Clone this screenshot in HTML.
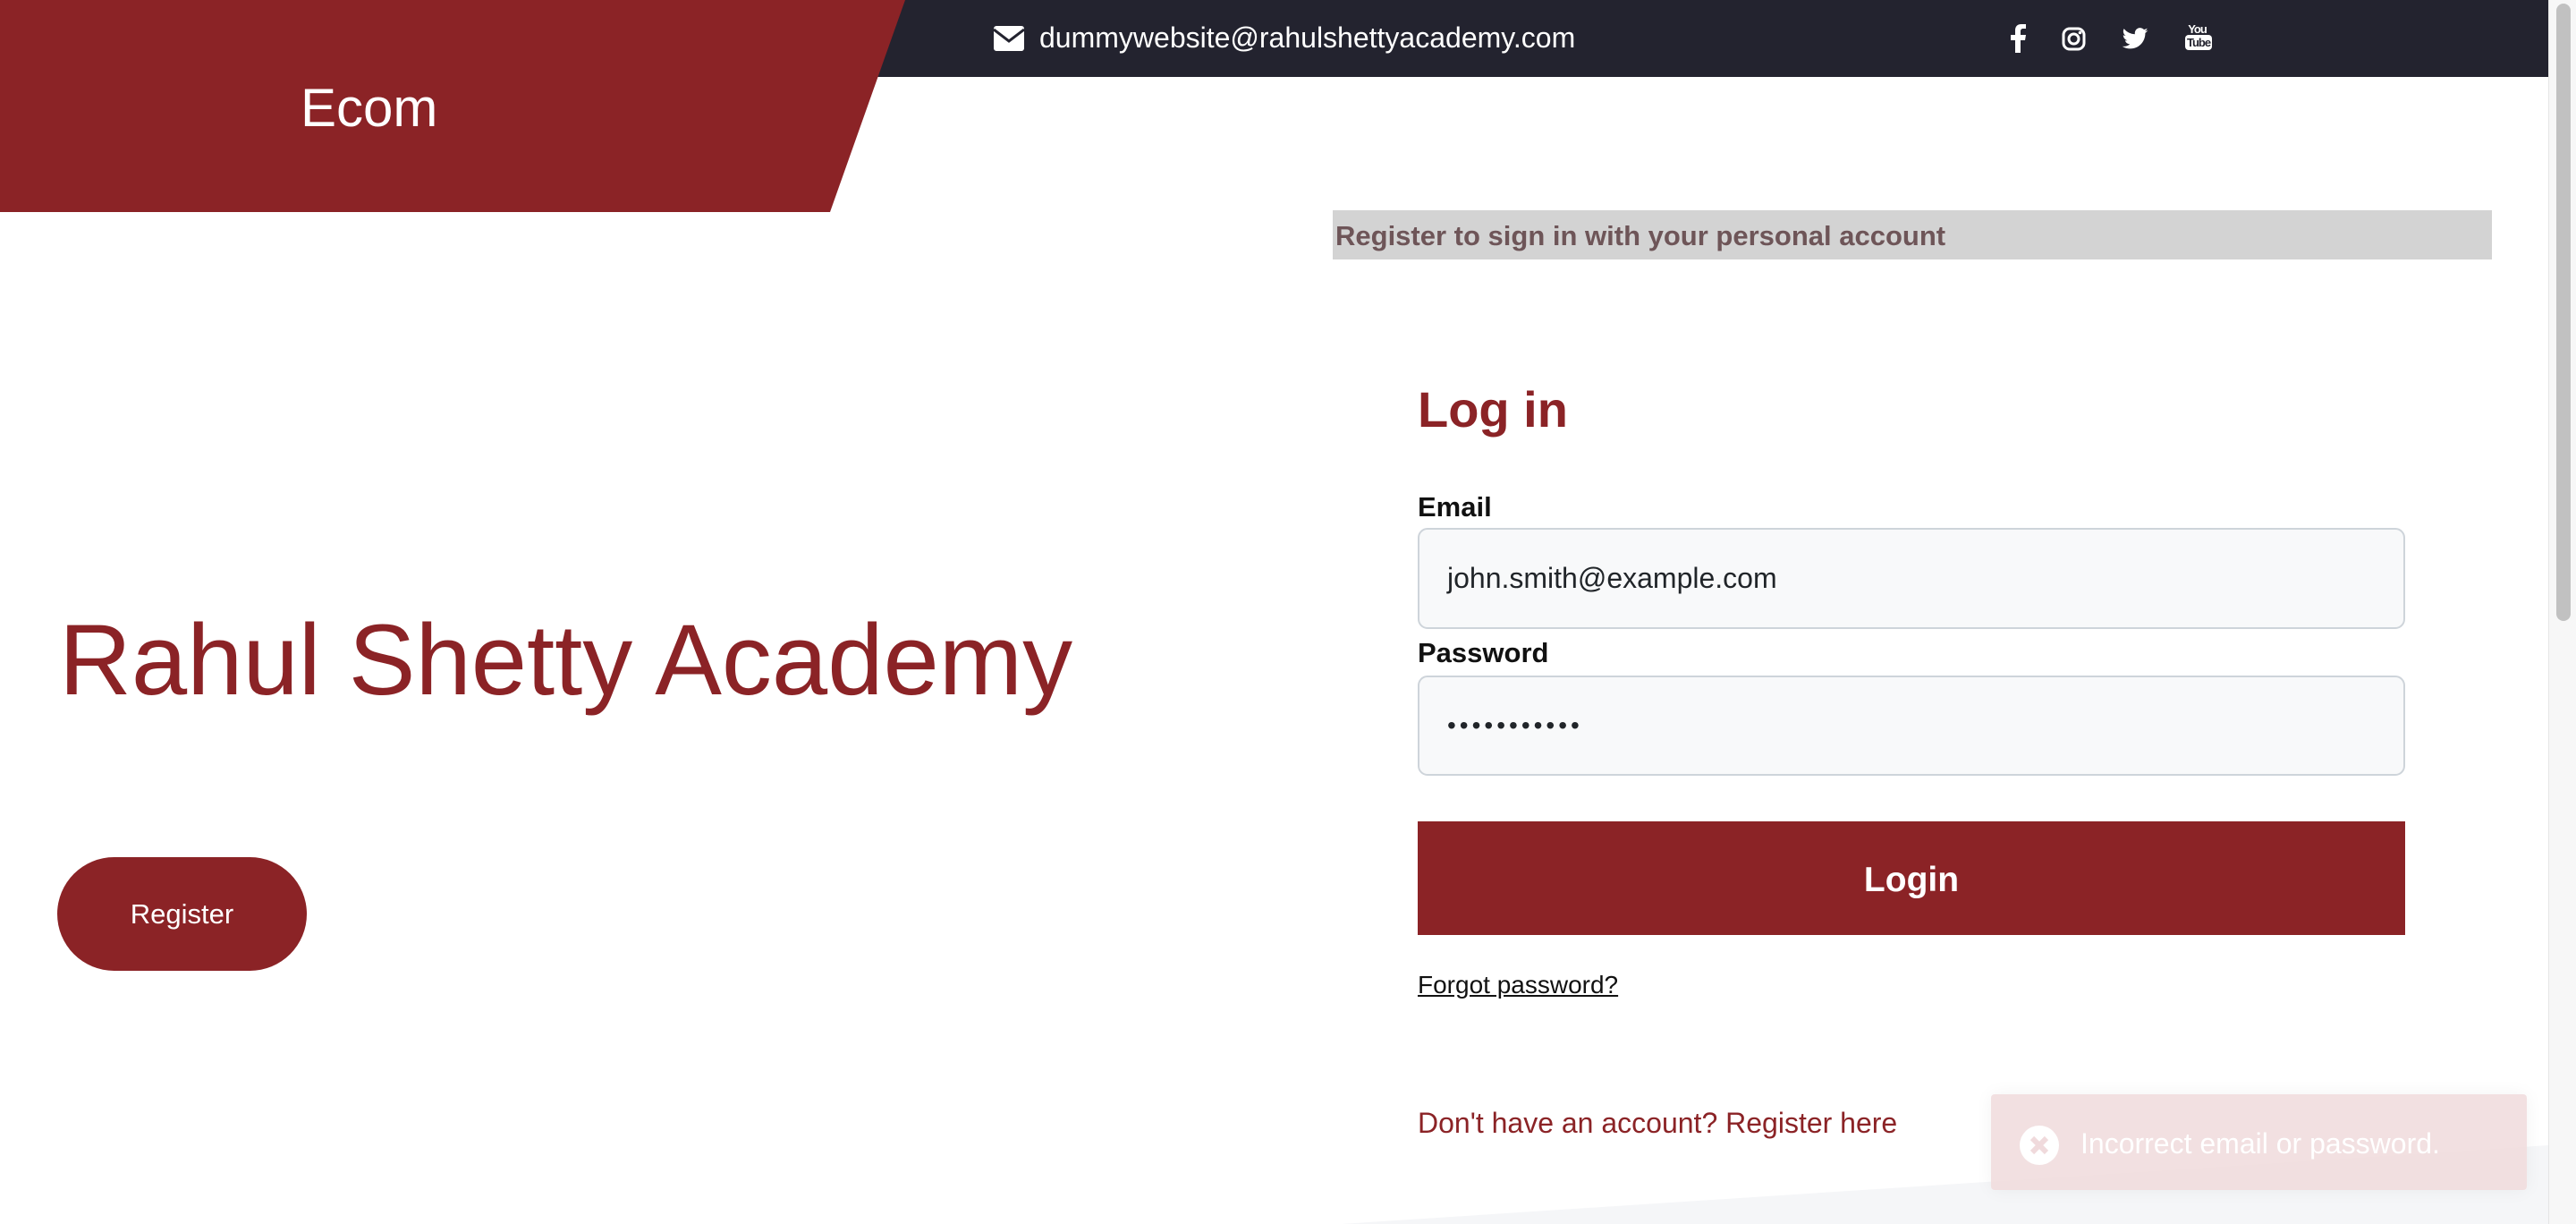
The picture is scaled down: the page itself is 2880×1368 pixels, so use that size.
<!DOCTYPE html>
<html><head><meta charset="utf-8"><style>
*{margin:0;padding:0;box-sizing:border-box}
body{width:2880px;height:1368px;overflow:hidden;background:#fff;font-family:"Liberation Sans",Arial,sans-serif;position:relative}
.a{position:absolute;white-space:nowrap}
.lbl{font-weight:bold;font-size:31px;color:#111}
.inp{position:absolute;left:1585px;width:1104px;background:#f8f9fa;border:2px solid #ced4da;border-radius:11px;font-size:32px;color:#212529;padding-left:31px;display:flex;align-items:center}
</style></head><body>
<div class="a" style="left:0;top:0;width:2849px;height:86px;background:#23232f"></div>
<svg class="a" style="left:0;top:0" width="1020" height="237"><polygon points="0,0 1012,0 928,237 0,237" fill="#8b2326"/></svg>
<div class="a" style="left:336px;top:86px;font-size:60px;color:#fff">Ecom</div>
<svg class="a" style="left:1111px;top:29px" width="34" height="28" viewBox="0 0 34 28"><rect x="0" y="0" width="34" height="28" rx="3" fill="#fff"/><path d="M0 4 L17 17 L34 4" stroke="#23232f" stroke-width="3" fill="none"/></svg>
<div class="a" style="left:1162px;top:24px;font-size:32px;color:#fff">dummywebsite@rahulshettyacademy.com</div>
<svg class="a" style="left:2246px;top:27px" width="20" height="32" viewBox="0 0 20 32"><path d="M13 32V18h5l1-6h-6V8c0-2 1-3 3-3h3V0h-5c-5 0-7 3-7 7v5H2v6h5v14z" fill="#fff"/></svg>
<svg class="a" style="left:2305px;top:30px" width="27" height="27" viewBox="0 0 27 27"><rect x="2" y="2" width="23" height="23" rx="7" fill="none" stroke="#fff" stroke-width="3"/><circle cx="13.5" cy="13.5" r="5.5" fill="none" stroke="#fff" stroke-width="3"/><circle cx="20.5" cy="6.5" r="1.8" fill="#fff"/></svg>
<svg class="a" style="left:2372px;top:31px" width="30" height="24" viewBox="0 0 24 20"><path d="M24 2.4c-.9.4-1.8.7-2.8.8 1-.6 1.8-1.6 2.2-2.7-1 .6-2 1-3.1 1.2A4.9 4.9 0 0 0 11.9 6C7.8 5.8 4.2 3.9 1.7.9c-1.3 2.3-.6 5.1 1.5 6.6-.8 0-1.6-.3-2.2-.6 0 2.4 1.7 4.4 3.9 4.9-.7.2-1.5.2-2.2.1.6 2 2.5 3.4 4.6 3.4A9.9 9.9 0 0 1 0 17.3 14 14 0 0 0 7.5 19.5c9.1 0 14.3-7.7 14-14.6 1-.7 1.8-1.6 2.5-2.5z" fill="#fff"/></svg>
<div class="a" style="left:2443px;top:26px;width:27px;text-align:center;color:#fff;font-weight:bold;font-size:13px;line-height:13px;letter-spacing:-1px">You<br><span style="display:inline-block;background:#fff;color:#23232f;border-radius:4px;padding:2px 2px;font-size:13px">Tube</span></div>
<div class="a" style="left:1490px;top:235px;width:1296px;height:55px;background:#d3d3d3"></div>
<div class="a" style="left:1493px;top:246px;font-size:31px;font-weight:bold;color:#6e5558">Register to sign in with your personal account</div>
<div class="a" style="left:1585px;top:425px;font-size:56px;font-weight:bold;color:#8b2326">Log in</div>
<div class="a lbl" style="left:1585px;top:549px">Email</div>
<div class="inp" style="top:590px;height:113px">john.smith@example.com</div>
<div class="a lbl" style="left:1585px;top:712px">Password</div>
<div class="inp" style="top:755px;height:112px;letter-spacing:4px;font-size:28px">•••••••••••</div>
<div class="a" style="left:1585px;top:918px;width:1104px;height:127px;background:#8b2326;color:#fff;font-weight:bold;font-size:39px;display:flex;align-items:center;justify-content:center;padding-top:4px">Login</div>
<div class="a" style="left:1585px;top:1085px;font-size:28px;color:#111;text-decoration:underline">Forgot password?</div>
<div class="a" style="left:1585px;top:1237px;font-size:32px;color:#8b2326">Don't have an account? Register here</div>
<div class="a" style="left:66px;top:673px;font-size:112px;color:#8b2326">Rahul Shetty Academy</div>
<div class="a" style="left:64px;top:958px;width:279px;height:127px;border-radius:64px;background:#8b2326;color:#fff;font-size:31px;display:flex;align-items:center;justify-content:center">Register</div>
<svg class="a" style="left:1500px;top:1280px" width="1349" height="88"><polygon points="0,88 1349,0 1349,88" fill="#f5f6f8"/></svg>
<div class="a" style="left:2226px;top:1223px;width:599px;height:107px;background:rgba(240,218,220,.85);border-radius:4px;box-shadow:0 0 20px rgba(0,0,0,.05)"></div>
<svg class="a" style="left:2258px;top:1258px" width="44" height="44" viewBox="0 0 44 44"><circle cx="22" cy="22" r="22" fill="#fff"/><path d="M14 14L30 30M30 14L14 30" stroke="#f0dadc" stroke-width="6"/></svg>
<div class="a" style="left:2326px;top:1260px;font-size:32px;color:#fff">Incorrect email or password.</div>
<div class="a" style="left:2849px;top:0;width:31px;height:1368px;background:#f7f7f7;border-left:1px solid #e5e5e5"></div>
<div class="a" style="left:2858px;top:4px;width:16px;height:690px;background:#c1c1c1;border-radius:8px"></div>
</body></html>
